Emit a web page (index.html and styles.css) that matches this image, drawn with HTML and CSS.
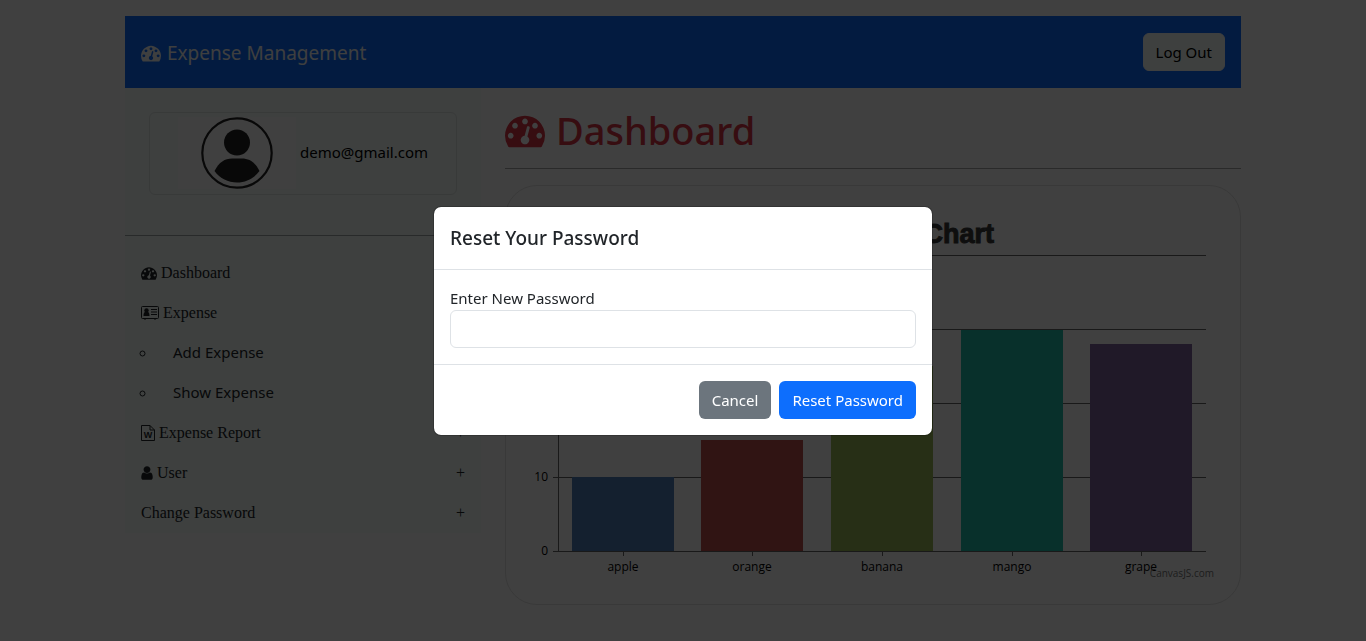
FILE: index.html
```html
<!DOCTYPE html>
<html lang="en">
<head>
<meta charset="utf-8">
<meta name="viewport" content="width=device-width, initial-scale=1">
<title>Expense Management</title>
<link rel="stylesheet" href="styles.css">
</head>
<body>
<svg class="sprite" aria-hidden="true">
  <symbol id="gauge" viewBox="0 0 1792 1792"><path d="M384 1152q0-53-37.5-90.5t-90.5-37.5-90.5 37.5-37.5 90.5 37.5 90.5 90.5 37.5 90.5-37.5 37.5-90.5zm192-448q0-53-37.5-90.5t-90.5-37.5-90.5 37.5-37.5 90.5 37.5 90.5 90.5 37.5 90.5-37.5 37.5-90.5zm428 481l101-382q6-26-7.5-48.5t-38.5-29.5-48 6.5-30 39.5l-101 382q-60 5-107 43.5t-63 98.5q-20 77 20 146t117 89 146-20 89-117q16-60-6-117t-72-91zm660-33q0-53-37.5-90.5t-90.5-37.5-90.5 37.5-37.5 90.5 37.5 90.5 90.5 37.5 90.5-37.5 37.5-90.5zm-640-640q0-53-37.5-90.5t-90.5-37.5-90.5 37.5-37.5 90.5 37.5 90.5 90.5 37.5 90.5-37.5 37.5-90.5zm448 192q0-53-37.5-90.5t-90.5-37.5-90.5 37.5-37.5 90.5 37.5 90.5 90.5 37.5 90.5-37.5 37.5-90.5zm320 448q0 261-141 483-19 29-54 29h-1402q-35 0-54-29-141-221-141-483 0-182 71-348t191-286 286-191 348-71 348 71 286 191 191 286 71 348z"/></symbol>
</svg>

<div class="container">
  <header class="navbar">
    <a class="brand" href="#"><svg class="icon icon-brand" aria-hidden="true"><use href="#gauge"/></svg>Expense Management</a>
    <button class="btn btn-light" type="button">Log Out</button>
  </header>

  <div class="row">
    <aside class="sidebar">
      <div class="profile">
        <svg class="avatar" viewBox="0 0 118 72" aria-hidden="true">
          <rect width="118" height="72" fill="#fff"/>
          <circle cx="59" cy="36" r="34.700" fill="none" stroke="#212121" stroke-width="2.200"/>
          <circle cx="59" cy="25.500" r="13" fill="#212121"/>
          <path d="M36.500 54C41 45 47 41.500 54 41.500h10C71 41.500 77 45 81.500 54 76 61.500 68 65.500 59 65.500S42 61.500 36.500 54z" fill="#212121"/>
        </svg>
        <span class="email">demo@gmail.com</span>
      </div>
      <hr class="rule">
      <nav>
        <ul class="menu">
          <li><a href="#"><svg class="icon" aria-hidden="true"><use href="#gauge"/></svg>Dashboard</a></li>
          <li><a href="#"><svg class="icon icon-wide" viewBox="0 0 18 16" aria-hidden="true"><rect x="0.500" y="1.500" width="17" height="12" rx="1" fill="none" stroke="currentColor"/><circle cx="5.500" cy="5.500" r="2.200"/><path d="M2.500 11c0-2.500.7-4 1.700-4h2.600c1 0 1.700 1.500 1.700 4zM10 4h6v1h-6zM10 6.500h6v1h-6zM10 9h6v1h-6zM3 13h2v1.500H3zM13 13h2v1.500h-2z"/></svg>Expense</a>
            <ul class="submenu">
              <li><a href="#">Add Expense</a></li>
              <li><a href="#">Show Expense</a></li>
            </ul>
          </li>
          <li><a href="#"><svg class="icon icon-file" viewBox="0 0 14 16" aria-hidden="true"><path d="M.5.500H9L13.500 5v10.500H.5zM9 .5V5h4.500" fill="none" stroke="currentColor"/><text class="file-mark" x="7" y="13" text-anchor="middle">W</text></svg>Expense Report<span class="plus">+</span></a></li>
          <li><a href="#"><svg class="icon icon-user" viewBox="256 0 1280 1792" aria-hidden="true"><path d="M1536 1399q0 109-62.5 187t-150.5 78h-854q-88 0-150.5-78t-62.5-187q0-85 8.5-160.5t31.5-152 58.5-131 94-89 134.5-34.5q131 128 313 128t313-128q76 0 134.5 34.5t94 89 58.5 131 31.5 152 8.5 160.5zm-256-887q0 159-112.5 271.5t-271.5 112.5-271.5-112.5-112.5-271.5 112.5-271.5 271.5-112.5 271.5 112.5 112.5 271.5z"/></svg>User<span class="plus">+</span></a></li>
          <li><a href="#">Change Password<span class="plus">+</span></a></li>
        </ul>
      </nav>
    </aside>

    <main class="main">
      <h1 class="title"><svg class="icon icon-title" aria-hidden="true"><use href="#gauge"/></svg>Dashboard</h1>
      <hr class="rule">
      <section class="chart-card">
        <svg class="chart" viewBox="0 0 734 418" role="img" aria-label="Chart">
          <text class="chart-title" x="488" y="57" text-anchor="end">Chart</text>
          <path class="axis" d="M47 69.500H700M47 143.500H700M47 217.500H700M47 291.500H700"/>
          <rect x="66" y="291" width="102" height="74" fill="#4f81bc"/>
          <rect x="195" y="254" width="102" height="111" fill="#c0504e"/>
          <rect x="325" y="180" width="102" height="185" fill="#9bbb58"/>
          <rect x="455" y="144" width="102" height="221" fill="#23bfaa"/>
          <rect x="584" y="158" width="102" height="207" fill="#8064a1"/>
          <path class="axis" d="M52.500 69V365M47 365.500H700M117.500 365v5M246.500 365v5M376.500 365v5M506.500 365v5M635.500 365v5"/>
          <g class="labels" text-anchor="end">
            <text x="42" y="369">0</text><text x="42" y="295">10</text><text x="42" y="221">20</text><text x="42" y="147">30</text><text x="42" y="73">40</text>
          </g>
          <g class="labels" text-anchor="middle">
            <text x="117" y="385">apple</text><text x="246" y="385">orange</text><text x="376" y="385">banana</text><text x="506" y="385">mango</text><text x="635" y="385">grape</text>
          </g>
          <text class="credit" x="708" y="391" text-anchor="end">CanvasJS.com</text>
        </svg>
      </section>
    </main>
  </div>
</div>

<div class="backdrop">
  <form class="modal" role="dialog" aria-modal="true" aria-labelledby="reset-title">
    <div class="modal-header"><h2 class="modal-title" id="reset-title">Reset Your Password</h2></div>
    <div class="modal-body">
      <label for="new-password">Enter New Password</label>
      <input class="field" id="new-password" type="password">
    </div>
    <div class="modal-footer">
      <button class="btn btn-secondary" type="button">Cancel</button>
      <button class="btn btn-primary" type="submit">Reset Password</button>
    </div>
  </form>
</div>
</body>
</html>
```

FILE: styles.css
```css
*, *::before, *::after { box-sizing: border-box; }

body {
  margin: 0;
  color: #212529;
  background: #fff;
  font: 15px/24px "Segoe UI", "Noto Sans", sans-serif;
}

a { color: inherit; text-decoration: none; }

.sprite { display: none; }

.icon {
  flex: none;
  width: 16px;
  height: 16px;
  fill: currentColor;
}
.icon-brand { width: 20px; height: 20px; }
.icon-title { width: 40px; height: 40px; }
.icon-wide { width: 18px; }
.icon-file { width: 14px; }
.icon-user { width: 12px; }
.file-mark { font: bold 9px "Liberation Sans", sans-serif; }

.container {
  max-width: 1140px;
  margin: 16px auto 0;
  padding: 0 12px;
}

.navbar {
  display: flex;
  align-items: center;
  justify-content: space-between;
  padding: 17px 16px;
  color: #f8f9fa;
  background: #0d6efd;
}

.brand {
  display: flex;
  align-items: center;
  gap: 6px;
  padding-top: 2px;
  font-size: 19px;
}

.btn {
  padding: 6px 12px;
  border: 1px solid transparent;
  border-radius: 6px;
  font: inherit;
}
.btn-light { color: #000; background: #f5fffa; border-color: #f8f9fa; }
.btn-secondary { color: #fff; background: #6c757d; }
.btn-primary { color: #fff; background: #0d6efd; }

.row {
  display: grid;
  grid-template-columns: minmax(0, 356fr) minmax(0, 736fr);
  gap: 24px;
  align-items: start;
}

.sidebar {
  padding-top: 24px;
  background: #f5fffa;
}

.profile {
  display: flex;
  align-items: center;
  justify-content: center;
  gap: 4px;
  margin: 0 24px 40px;
  padding: 4px 0 5px;
  border: 1px solid #e0e6e4;
  border-radius: 6px;
  color: #000;
}
.avatar { width: 118px; height: 72px; }
.email { padding-bottom: 2px; }

.rule {
  height: 1px;
  margin: 16px 0;
  border: 0;
  background: #212529;
  opacity: .4;
}

.menu, .submenu { margin: 0; padding: 0; list-style: none; }

.menu {
  padding-top: 1px;
  font-family: "Liberation Serif", "Times New Roman", serif;
  font-size: 16px;
}
.menu a {
  display: flex;
  align-items: center;
  gap: 4px;
  padding: 8px 16px;
}
.plus { margin-left: auto; }

.submenu {
  padding-left: 32px;
  list-style: circle;
  font-family: "Segoe UI", "Noto Sans", sans-serif;
  font-size: 15px;
}
.submenu a { padding: 7px 16px 9px; }

.title {
  display: flex;
  align-items: center;
  gap: 11px;
  margin: 20px 0 16px;
  color: #dc3545;
  font-size: 38px;
  font-weight: 500;
  line-height: 44px;
}

.chart-card {
  border: 1px solid #e2e2e2;
  border-radius: 32px;
}
.chart { display: block; width: 100%; }
.chart-title {
  fill: #3a3a3a;
  stroke: #3a3a3a;
  font: bold 27px Impact, "Liberation Sans Narrow", "Liberation Sans", sans-serif;
}
.axis { fill: none; stroke: #666; }
.labels { fill: #000; font: 12px "Trebuchet MS", "Open Sans", sans-serif; }
.credit { fill: #777; font: 10px "Trebuchet MS", "Open Sans", sans-serif; }

.backdrop {
  position: fixed;
  inset: 0;
  display: flex;
  align-items: center;
  justify-content: center;
  background: rgba(0, 0, 0, .75);
}

.modal {
  width: 500px;
  max-width: 100%;
  border: 1px solid rgba(0, 0, 0, .2);
  border-radius: 8px;
  background: #fff;
  background-clip: padding-box;
}
.modal-header { padding: 16px; border-bottom: 1px solid #dee2e6; }
.modal-title {
  margin: 0;
  font-size: 19px;
  font-weight: 500;
  line-height: 30px;
}
.modal-body { padding: 16px; }
.modal-body label { display: block; }
.field {
  display: block;
  width: 100%;
  height: 38px;
  padding: 6px 12px;
  border: 1px solid #dee2e6;
  border-radius: 6px;
  background: #fff;
  font: inherit;
}
.modal-footer {
  display: flex;
  justify-content: flex-end;
  gap: 8px;
  padding: 16px;
  border-top: 1px solid #dee2e6;
}
```
